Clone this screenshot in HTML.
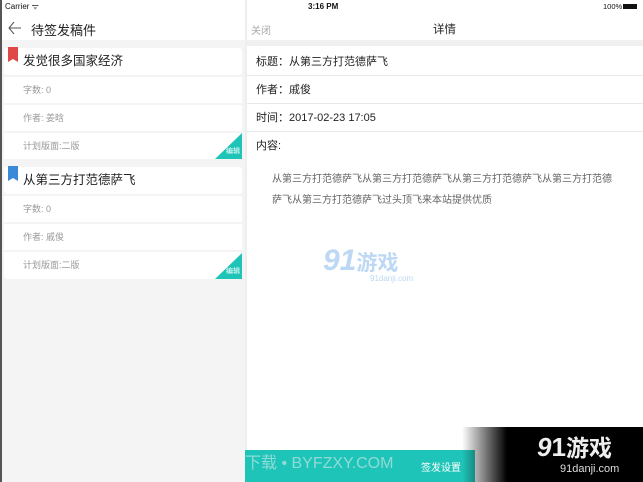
<!DOCTYPE html>
<html><head><meta charset="utf-8"><style>
*{margin:0;padding:0;box-sizing:border-box}
body{width:643px;height:482px;overflow:hidden;position:relative;background:#f4f4f4;font-family:"Liberation Sans","Noto Sans CJK SC",sans-serif;}
.abs{position:absolute}
.card{position:absolute;left:4px;width:238px;background:#fff;border-radius:3px}
.row{position:absolute;left:4px;width:238px;background:#fff;font-size:9px;color:#999;padding-left:19px;}
.t{font-size:12.5px;color:#222;padding-left:19px}
.tri{position:absolute;right:0;bottom:0;width:27px;height:26px;background:#1fc4b8;clip-path:polygon(100% 0,100% 100%,0 100%)}
.trit{position:absolute;right:2px;bottom:3px;font-size:7px;line-height:8px;color:#fff;white-space:nowrap}
.rrow{position:absolute;left:247px;width:396px;background:#fff;font-size:11px;color:#222;padding-left:9px;border-bottom:1px solid #e8e8e8}
</style></head><body>
<div class="abs" style="left:0;top:0;width:2px;height:482px;background:#555"></div>
<div class="abs" style="left:2px;top:0;width:641px;height:40px;background:#fff"></div>
<div class="abs" style="left:5px;top:1px;font-size:8px;color:#111">Carrier ᯤ</div>
<div class="abs" style="left:308px;top:2px;font-size:8px;color:#111;font-weight:bold">3:16 PM</div>
<div class="abs" style="left:603px;top:2px;font-size:7.5px;color:#111">100%</div>
<div class="abs" style="left:623px;top:4px;width:14px;height:5px;background:#111"></div>
<svg class="abs" style="left:8px;top:21px" width="14" height="14"><path d="M13 7H1M6 1L1 7l5 6" stroke="#555" stroke-width="1" fill="none"/></svg>
<div class="abs" style="left:31px;top:20px;font-size:13px;color:#222">待签发稿件</div>
<div class="abs" style="left:245px;top:0;width:2px;height:482px;background:#eee"></div>
<div class="abs" style="left:251px;top:22px;font-size:10px;color:#aaa">关闭</div>
<div class="abs" style="left:433px;top:21px;font-size:11.5px;color:#222">详情</div>
<div class="abs" style="left:247px;top:40px;width:396px;height:6px;background:#f0f0f0"></div>

<div class="card t" style="top:48px;height:27px;line-height:27px">发觉很多国家经济</div>
<div class="abs" style="left:8px;top:47px;width:10px;height:15px;background:#e04848;clip-path:polygon(0 0,100% 0,100% 100%,50% 80%,0 100%)"></div>
<div class="row" style="top:77px;height:26px;line-height:26px">字数: 0</div>
<div class="row" style="top:105px;height:26px;line-height:26px">作者: 姜晗</div>
<div class="row" style="top:133px;height:26px;line-height:26px">计划版面:二版<div class="tri"></div><div class="trit">编辑</div></div>

<div class="card t" style="top:167px;height:27px;line-height:27px">从第三方打范德萨飞</div>
<div class="abs" style="left:8px;top:166px;width:10px;height:15px;background:#3a8ad8;clip-path:polygon(0 0,100% 0,100% 100%,50% 80%,0 100%)"></div>
<div class="row" style="top:196px;height:26px;line-height:26px">字数: 0</div>
<div class="row" style="top:224px;height:26px;line-height:26px">作者: 戚俊</div>
<div class="row" style="top:252px;height:27px;line-height:27px;border-radius:0 0 3px 3px">计划版面:二版<div class="tri"></div><div class="trit">编辑</div></div>

<div class="abs" style="left:247px;top:46px;width:396px;height:436px;background:#fff"></div>
<div class="rrow" style="top:48px;height:28px;line-height:28px">标题：从第三方打范德萨飞</div>
<div class="rrow" style="top:76px;height:28px;line-height:28px">作者：戚俊</div>
<div class="rrow" style="top:104px;height:28px;line-height:28px">时间：2017-02-23 17:05</div>
<div class="rrow" style="top:132px;height:28px;line-height:28px;border:none">内容:</div>
<div class="abs" style="left:272px;top:169px;width:346px;font-size:10px;color:#666;line-height:21px">从第三方打范德萨飞从第三方打范德萨飞从第三方打范德萨飞从第三方打范德萨飞从第三方打范德萨飞过头顶飞来本站提供优质</div>
<div class="abs" style="left:323px;top:244px;font-size:30px;font-weight:bold;font-style:italic;color:#bcd8f4;line-height:34px">91<span style="font-size:21px;font-style:normal">游戏</span></div>
<div class="abs" style="left:370px;top:274px;font-size:8px;color:#bcd8f4">91danji.com</div>

<div class="abs" style="left:245px;top:450px;width:230px;height:32px;background:#1fc4b8"></div>
<div class="abs" style="left:462px;top:427px;width:181px;height:55px;background:linear-gradient(90deg,rgba(0,0,0,0),#000 45px)"></div>
<div class="abs" style="left:245px;top:449px;font-size:16px;color:#8fdcd6;white-space:nowrap">下载 • BYFZXY.COM</div>
<div class="abs" style="left:421px;top:459px;font-size:10px;color:#fff">签发设置</div>
<div class="abs" style="left:537px;top:429px;font-size:26px;font-weight:bold;color:#eee;font-style:italic">9<span style="font-style:normal">1</span><span style="font-size:23px;font-style:normal">游戏</span></div>
<div class="abs" style="left:560px;top:463px;font-size:11px;color:#ddd">91danji.com</div>
</body></html>
